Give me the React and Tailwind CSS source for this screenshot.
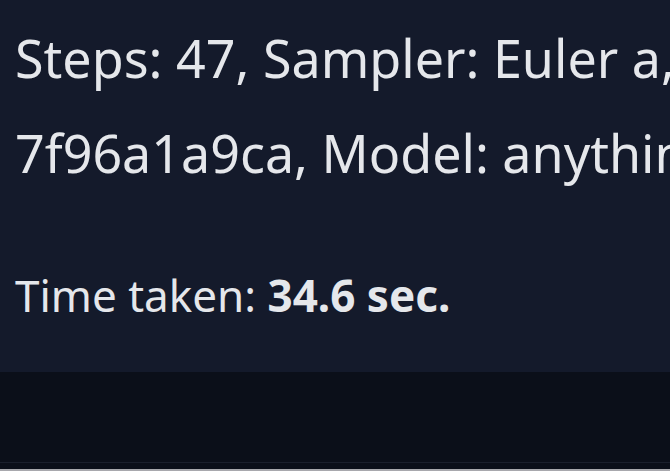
import React from 'react';

// Generation info panel (zoomed crop)
const App = () => {
  return (
    <div
      className="w-[670px] h-[471px] bg-[#0b0f19] overflow-hidden flex flex-col text-[#e5e7eb]"
      style={{ fontFamily: '"Noto Sans", Lato, sans-serif' }}
    >
      <div className="h-[372px] bg-[#141a2b] pl-[15px] pt-[10px] flex flex-col overflow-hidden">
        <p className="text-[52px] leading-[95px] whitespace-nowrap">Steps: 47, Sampler: Euler a, CFG scale: 7</p>
        <p className="text-[52px] leading-[95px] whitespace-nowrap">7f96a1a9ca, Model: anything-v3</p>
        <p className="mt-[65px] text-[44px] leading-[60px] whitespace-nowrap">
          Time taken: <span className="font-bold">34.6 sec.</span>
        </p>
      </div>
      <div className="flex-1" />
      <div className="h-[1px] bg-[#1a1f2c]" />
      <div className="h-[6px]" />
      <div className="h-[2px] bg-[#a8a8ad]" />
    </div>
  );
};

export default App;
